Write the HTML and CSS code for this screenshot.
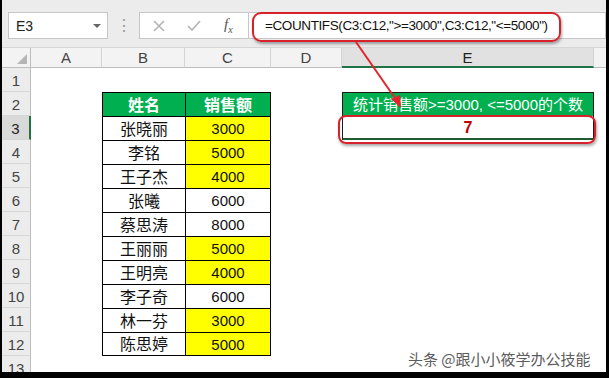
FILE: index.html
```html
<!DOCTYPE html>
<html lang="zh-CN">
<head>
<meta charset="utf-8">
<title>COUNTIFS</title>
<link rel="stylesheet" href="styles.css">
</head>
<body>
<div class="frame">
  <div class="topbar">
    <div class="namebox"><span class="ref">E3</span><span class="dd"></span></div>
    <div class="dots">⋮</div>
    <div class="fbtns">
      <svg class="ic" width="14" height="14" viewBox="0 0 14 14"><path d="M2 2 L12 12 M12 2 L2 12" stroke="#b4b4b4" stroke-width="1.6" fill="none"/></svg>
      <svg class="ic" width="16" height="14" viewBox="0 0 16 14"><path d="M2 7 L6 11 L14 2" stroke="#b4b4b4" stroke-width="1.6" fill="none"/></svg>
      <span class="fx">f<sub>x</sub></span>
    </div>
    <div class="formula">=COUNTIFS(C3:C12,"&gt;=3000",C3:C12,"&lt;=5000")</div>
  </div>
  <div class="sheet">
    <div class="ch corner"><span class="tri"></span></div>
    <div class="ch">A</div><div class="ch">B</div><div class="ch">C</div><div class="ch">D</div><div class="ch sel">E</div><div class="ch last"></div>

    <div class="rh">1</div><div></div><div></div><div></div><div></div><div></div><div></div>

    <div class="rh">2</div><div></div><div class="t th">姓名</div><div class="t tc th">销售额</div><div></div><div class="eh">统计销售额&gt;=3000, &lt;=5000的个数</div><div></div>

    <div class="rh rsel">3</div><div></div><div class="t">张晓丽</div><div class="t tc num y">3000</div><div></div><div class="ev">7</div><div></div>
    <div class="rh">4</div><div></div><div class="t">李铭</div><div class="t tc num y">5000</div><div></div><div></div><div></div>
    <div class="rh">5</div><div></div><div class="t">王子杰</div><div class="t tc num y">4000</div><div></div><div></div><div></div>
    <div class="rh">6</div><div></div><div class="t">张曦</div><div class="t tc num">6000</div><div></div><div></div><div></div>
    <div class="rh">7</div><div></div><div class="t">蔡思涛</div><div class="t tc num">8000</div><div></div><div></div><div></div>
    <div class="rh">8</div><div></div><div class="t">王丽丽</div><div class="t tc num y">5000</div><div></div><div></div><div></div>
    <div class="rh">9</div><div></div><div class="t">王明亮</div><div class="t tc num y">4000</div><div></div><div></div><div></div>
    <div class="rh">10</div><div></div><div class="t">李子奇</div><div class="t tc num">6000</div><div></div><div></div><div></div>
    <div class="rh">11</div><div></div><div class="t">林一芬</div><div class="t tc num y">3000</div><div></div><div></div><div></div>
    <div class="rh">12</div><div></div><div class="t tb">陈思婷</div><div class="t tc tb num y">5000</div><div></div><div></div><div></div>
    <div class="rh">13</div><div></div><div></div><div></div><div></div><div></div><div></div>
  </div>
</div>

<div class="mark mark-formula"></div>
<div class="mark mark-cell"></div>
<svg class="arrow" width="609" height="378" viewBox="0 0 609 378">
  <line x1="356" y1="42" x2="397" y2="101" stroke="#e3242b" stroke-width="2"/>
  <path d="M401 108 L391 99 L400 95 Z" fill="#e3242b"/>
</svg>
<div class="watermark">头条 @跟小小筱学办公技能</div>
</body>
</html>
```

FILE: styles.css
```css
html, body {
  margin: 0;
  padding: 0;
}
body {
  background: #000;
  width: 609px;
  height: 378px;
  overflow: hidden;
  font-family: "Liberation Sans", "Noto Sans CJK SC", sans-serif;
}
.frame {
  margin-left: 2px;
  width: 604px;
  height: 372px;
  overflow: hidden;
  background: #fff;
  display: flex;
  flex-direction: column;
}
.topbar {
  height: 48px;
  flex: none;
  background: #ececec;
  display: flex;
  align-items: flex-start;
  padding-top: 12px;
  box-sizing: border-box;
  border-bottom: 1px solid #d6d6d6;
}
.namebox {
  margin-left: 6px;
  width: 100px;
  height: 27px;
  box-sizing: border-box;
  background: #fff;
  border: 1px solid #c6c6c6;
  display: flex;
  align-items: center;
  justify-content: space-between;
  padding: 0 6px 0 7px;
}
.ref {
  font-size: 14px;
  color: #222;
}
.dd {
  width: 0;
  height: 0;
  border-left: 4px solid transparent;
  border-right: 4px solid transparent;
  border-top: 4px solid #666;
}
.dots {
  width: 31px;
  text-align: center;
  color: #9a9a9a;
  font-size: 16px;
  line-height: 27px;
}
.fbtns {
  width: 109px;
  height: 27px;
  box-sizing: border-box;
  background: #fff;
  border: 1px solid #c6c6c6;
  border-right: none;
  display: flex;
  align-items: center;
  padding-left: 12px;
  gap: 20px;
}
.fx {
  font-family: "Liberation Serif", serif;
  font-style: italic;
  font-size: 15px;
  color: #555;
  margin-left: 2px;
}
.fx sub {
  font-size: 10px;
}
.formula {
  flex: 1;
  height: 27px;
  box-sizing: border-box;
  background: #fff;
  border: 1px solid #c6c6c6;
  font-size: 13.5px;
  letter-spacing: -0.4px;
  line-height: 25px;
  padding-left: 16px;
  color: #111;
}
.sheet {
  display: grid;
  grid-template-columns: 29px 71px 83px 86px 71px 252px 1fr;
  grid-template-rows: 20px;
  grid-auto-rows: 24px;
}
.sheet > div {
  box-sizing: border-box;
}
.ch {
  background: #f3f3f3;
  border-right: 1px solid #d4d4d4;
  border-bottom: 1px solid #bdbdbd;
  font-size: 15px;
  color: #444;
  text-align: center;
  line-height: 19px;
}
.ch.last {
  border-right: none;
}
.ch.sel {
  background: #e1e1e1;
  border-bottom: 2px solid #217346;
  color: #222;
}
.corner {
  position: relative;
  border-right: 1px solid #bdbdbd;
}
.tri {
  position: absolute;
  right: 3px;
  bottom: 3px;
  width: 0;
  height: 0;
  border-left: 10px solid transparent;
  border-bottom: 10px solid #b5b5b5;
}
.rh {
  background: #ececec;
  border-right: 1px solid #bdbdbd;
  border-bottom: 1px solid #d6d6d6;
  font-size: 15px;
  color: #444;
  text-align: center;
  line-height: 26px;
}
.rh.rsel {
  background: #d9d9d9;
  border-right: 2px solid #217346;
  color: #222;
}
.t {
  border-left: 1px solid #000;
  border-top: 1px solid #000;
  font-family: "Noto Sans CJK SC", sans-serif;
  font-size: 16px;
  color: #111;
  text-align: center;
  line-height: 22px;
}
.t.tc {
  border-right: 1px solid #000;
}
.t.tb {
  border-bottom: 1px solid #000;
  line-height: 21px;
}
.t.th {
  background: #00b050;
  color: #fff;
  font-weight: bold;
}
.t.num {
  font-family: "Liberation Sans", sans-serif;
  font-size: 15px;
  line-height: 23px;
}
.t.y {
  background: #ffff00;
}
.eh {
  background: #00b050;
  border: 1px solid #1a1a1a;
  border-bottom: none;
  color: #fff;
  font-size: 15px;
  text-align: center;
  line-height: 23px;
  font-family: "Liberation Sans", "Noto Sans CJK SC", sans-serif;
}
.ev {
  border-left: 1px solid #1a1a1a;
  border-right: 1px solid #1a1a1a;
  border-bottom: 2px solid #1e5b32;
  color: #c00000;
  font-weight: bold;
  font-size: 16px;
  text-align: center;
  line-height: 24px;
}
.mark {
  position: absolute;
  box-sizing: border-box;
  border: 2px solid #d6232b;
  box-shadow: 1px 2px 3px rgba(0, 0, 0, 0.35);
}
.mark-formula {
  left: 252px;
  top: 12px;
  width: 309px;
  height: 30px;
  border-radius: 9px;
}
.mark-cell {
  left: 338px;
  top: 115px;
  width: 258px;
  height: 29px;
  border-radius: 8px;
}
.arrow {
  position: absolute;
  left: 0;
  top: 0;
}
.watermark {
  position: absolute;
  left: 408px;
  top: 348px;
  font-family: "Noto Sans CJK SC", sans-serif;
  font-size: 15px;
  color: #5c5c5c;
  text-shadow: 1px 1px 0 #fff, -1px -1px 0 #fff, 1px -1px 0 #fff, -1px 1px 0 #fff;
}
```
